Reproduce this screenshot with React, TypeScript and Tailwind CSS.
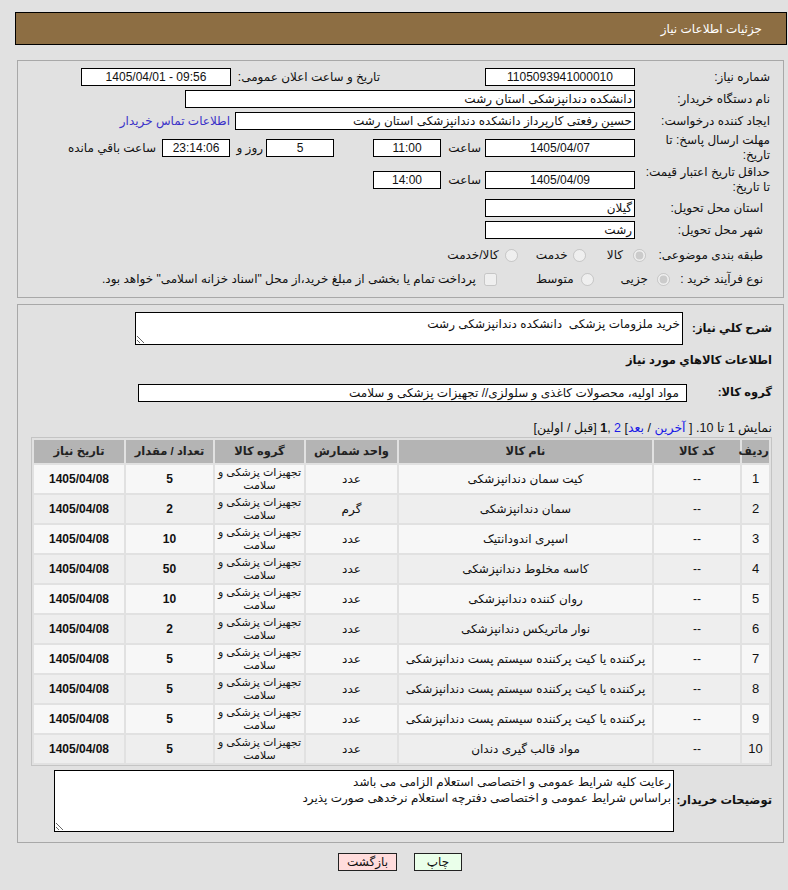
import React from "react";

const font = "font-['Liberation_Sans','DejaVu_Sans',sans-serif]";

type Item = { n: number; name: string; unit: string; qty: string };

const items: Item[] = [
  { n: 1, name: "کیت سمان دندانپزشکی", unit: "عدد", qty: "5" },
  { n: 2, name: "سمان دندانپزشکی", unit: "گرم", qty: "2" },
  { n: 3, name: "اسپری اندودانتیک", unit: "عدد", qty: "10" },
  { n: 4, name: "کاسه مخلوط دندانپزشکی", unit: "عدد", qty: "50" },
  { n: 5, name: "روان کننده دندانپزشکی", unit: "عدد", qty: "10" },
  { n: 6, name: "نوار ماتریکس دندانپزشکی", unit: "عدد", qty: "2" },
  { n: 7, name: "پرکننده یا کیت پرکننده سیستم پست دندانپزشکی", unit: "عدد", qty: "5" },
  { n: 8, name: "پرکننده یا کیت پرکننده سیستم پست دندانپزشکی", unit: "عدد", qty: "5" },
  { n: 9, name: "پرکننده یا کیت پرکننده سیستم پست دندانپزشکی", unit: "عدد", qty: "5" },
  { n: 10, name: "مواد قالب گیری دندان", unit: "عدد", qty: "5" },
];

function Field({
  w,
  children,
  center,
  ltr,
  className = "",
}: {
  w: string;
  children?: React.ReactNode;
  center?: boolean;
  ltr?: boolean;
  className?: string;
}) {
  return (
    <div
      dir={ltr ? "ltr" : undefined}
      className={`${w} h-[18px] shrink-0 border border-black bg-white flex items-center px-[2px] whitespace-nowrap overflow-hidden ${
        center ? "justify-center" : "justify-start"
      } ${className}`}
    >
      {children}
    </div>
  );
}

function Radio({ checked }: { checked?: boolean }) {
  return (
    <input
      type="radio"
      disabled
      checked={!!checked}
      readOnly
      className="m-0 w-[13px] h-[13px] shrink-0"
    />
  );
}

export default function App() {
  return (
    <div dir="rtl" className={`min-h-[890px] bg-[#e1e1e1] pt-[12px] text-[12px] text-[#111] ${font}`}>
      {/* title bar */}
      <div className="ml-[15px] mr-[1px] h-[33px] border border-black bg-[#8d6e43] flex items-center pr-[24px] text-white text-[12px]">
        جزئیات اطلاعات نیاز
      </div>

      {/* request summary */}
      <div className="mt-[15px] ml-[17px] mr-[4px] border border-[#a8a8a8] pt-[7px] pb-[8px] pr-[13px]">
        <div className="flex items-center h-[18px]">
          <div className="w-[135px] shrink-0">شماره نیاز:</div>
          <Field w="w-[150px]" center>1105093941000010</Field>
          <div className="w-[105px] shrink-0" />
          <div className="w-[149px] shrink-0">تاریخ و ساعت اعلان عمومی:</div>
          <Field w="w-[150px]" center ltr>1405/04/01 - 09:56</Field>
        </div>

        <div className="flex items-center h-[18px] mt-[4px]">
          <div className="w-[135px] shrink-0">نام دستگاه خریدار:</div>
          <Field w="w-[450px]">دانشکده دندانپزشکی استان رشت</Field>
        </div>

        <div className="flex items-center h-[18px] mt-[4px]">
          <div className="w-[135px] shrink-0">ایجاد کننده درخواست:</div>
          <Field w="w-[400px]">حسین رفعتی کارپرداز دانشکده دندانپزشکی استان رشت</Field>
          <a className="mr-[5px] text-[#3a32c8] whitespace-nowrap">اطلاعات تماس خریدار</a>
        </div>

        <div className="flex items-center h-[30px] mt-[3px]">
          <div className="w-[135px] shrink-0 leading-[15px]">
            مهلت ارسال پاسخ: تا
            <br />
            تاریخ:
          </div>
          <Field w="w-[150px]" center>1405/04/07</Field>
          <div className="w-[44px] shrink-0 pr-[4px]">ساعت</div>
          <Field w="w-[68px]" center>11:00</Field>
          <div className="w-[39px] shrink-0" />
          <Field w="w-[68px]" center>5</Field>
          <div className="w-[36px] shrink-0 pr-[3px]">روز و</div>
          <Field w="w-[68px]" center className="bg-[#ffffee]">23:14:06</Field>
          <div className="mr-[6px] whitespace-nowrap">ساعت باقي مانده</div>
        </div>

        <div className="flex items-center h-[30px] mt-[2px]">
          <div className="w-[135px] shrink-0 leading-[15px]">
            حداقل تاریخ اعتبار قیمت:
            <br />
            تا تاریخ:
          </div>
          <Field w="w-[150px]" center>1405/04/09</Field>
          <div className="w-[44px] shrink-0 pr-[4px]">ساعت</div>
          <Field w="w-[68px]" center>14:00</Field>
        </div>

        <div className="flex items-center h-[18px] mt-[4px] pr-[7px]">
          <div className="w-[128px] shrink-0">استان محل تحویل:</div>
          <Field w="w-[150px]">گیلان</Field>
        </div>

        <div className="flex items-center h-[18px] mt-[4px] pr-[7px]">
          <div className="w-[128px] shrink-0">شهر محل تحویل:</div>
          <Field w="w-[150px]">رشت</Field>
        </div>

        <div className="flex items-center h-[20px] mt-[6px] pr-[7px]">
          <div className="w-[117px] shrink-0">طبقه بندی موضوعی:</div>
          <Radio checked />
          <span className="mr-[10px]">کالا</span>
          <span className="mr-[21px]" />
          <Radio />
          <span className="mr-[5px]">خدمت</span>
          <span className="mr-[18px]" />
          <Radio />
          <span className="mr-[6px]">کالا/خدمت</span>
        </div>

        <div className="flex items-center h-[20px] mt-[4px] pr-[7px]">
          <div className="w-[93px] shrink-0">نوع فرآیند خرید :</div>
          <Radio checked />
          <span className="mr-[9px]">جزیی</span>
          <span className="mr-[27px]" />
          <Radio />
          <span className="mr-[7px]">متوسط</span>
          <span className="mr-[39px]" />
          <input type="checkbox" disabled readOnly className="m-0 w-[13px] h-[13px]" />
          <span className="mr-[8px] whitespace-nowrap">
            پرداخت تمام یا بخشی از مبلغ خرید،از محل "اسناد خزانه اسلامی" خواهد بود.
          </span>
        </div>
      </div>

      {/* goods */}
      <div className="mt-[6px] ml-[17px] mr-[4px] border border-[#a8a8a8] pt-[7px] pb-[10px] pr-[11px] pl-[13px]">
        <div className="flex items-center">
          <div className="w-[89px] shrink-0 whitespace-nowrap font-bold text-[11.5px]">شرح کلي نیاز:</div>
          <textarea
            readOnly
            value="خرید ملزومات پزشکی  دانشکده دندانپزشکی رشت"
            className={`w-[548px] h-[33px] shrink-0 border border-black bg-white px-[2px] pt-[3px] pb-0 text-[12px] leading-[16px] outline-none ${font}`}
          />
        </div>

        <div className="mt-[7px] h-[16px] leading-[16px] font-bold text-[11.5px]">اطلاعات کالاهاي مورد نياز</div>

        <div className="flex items-center mt-[16px]">
          <div className="w-[85px] shrink-0 whitespace-nowrap font-bold text-[11.5px]">گروه کالا:</div>
          <Field w="w-[549px]" className="pr-[7px]">
            مواد اولیه، محصولات کاغذی و سلولزی// تجهیزات پزشکی و سلامت
          </Field>
        </div>

        <div className="mt-[18px] h-[16px] leading-[16px] text-[12.5px]">
          نمایش 1 تا 10. [ <a className="text-[#1a1ae6]">آخرین</a> / <a className="text-[#1a1ae6]">بعد</a>]{" "}
          <a className="text-[#1a1ae6]">2</a> ,<b>1</b> [قبل / اولین]
        </div>

        <table className="mt-[1px] w-full table-fixed border-separate border-spacing-[2px] border border-[#c4c4c4] bg-[#e1e1e1]">
          <thead>
            <tr className="h-[23px] bg-[#b4b4b4] font-bold text-[#222] text-[11.5px]">
              <th className="w-[27px] p-0">ردیف</th>
              <th className="w-[86px] p-0">کد کالا</th>
              <th className="w-[253px] p-0">نام کالا</th>
              <th className="w-[91px] p-0">واحد شمارش</th>
              <th className="w-[89px] p-0">گروه کالا</th>
              <th className="w-[87px] p-0">تعداد / مقدار</th>
              <th className="p-0">تاریخ نیاز</th>
            </tr>
          </thead>
          <tbody>
            {items.map((it, i) => (
              <tr
                key={it.n}
                className={`h-[28px] text-center ${i % 2 === 0 ? "bg-[#f7f7f7]" : "bg-[#eeeeee]"}`}
              >
                <td className="p-0 text-[13px]">{it.n}</td>
                <td className="p-0">--</td>
                <td className="p-0 whitespace-nowrap">{it.name}</td>
                <td className="p-0">{it.unit}</td>
                <td className="p-0 whitespace-nowrap text-[11px] leading-[13px]">
                  تجهیزات پزشکی و
                  <br />
                  سلامت
                </td>
                <td className="p-0 font-bold">{it.qty}</td>
                <td className="p-0 font-bold">1405/04/08</td>
              </tr>
            ))}
          </tbody>
        </table>

        <div className="flex items-center mt-[4px]">
          <div className="w-[98px] shrink-0 whitespace-nowrap font-bold text-[11.5px]">توضیحات خریدار:</div>
          <textarea
            readOnly
            value={
              "رعایت کلیه شرایط عمومی و اختصاصی استعلام الزامی می باشد\nبراساس شرایط عمومی و اختصاصی دفترچه استعلام نرخدهی صورت پذیرد"
            }
            className={`w-[620px] h-[62px] shrink-0 border border-black bg-white px-[2px] pt-[3px] text-[12px] leading-[16px] outline-none ${font}`}
          />
        </div>
      </div>

      {/* actions */}
      <div className="mt-[10px] flex justify-center gap-[17px] pl-[12px]">
        <button className="h-[18px] w-[48px] border border-[#222] bg-[#eaffea] text-[12px] leading-[16px]">چاپ</button>
        <button className="h-[18px] w-[59px] border border-[#222] bg-[#ffdcdc] text-[12px] leading-[16px]">بازگشت</button>
      </div>
    </div>
  );
}
